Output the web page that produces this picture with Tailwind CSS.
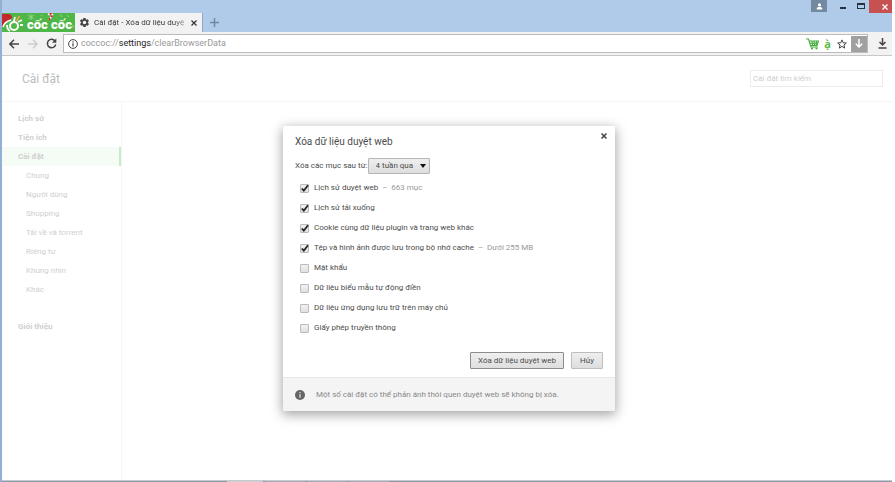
<!DOCTYPE html>
<html lang="vi">
<head>
    <meta charset="UTF-8">
    <meta name="viewport" content="width=device-width, initial-scale=1.0">
    <title>Cài đặt - Xóa dữ liệu duyệt web</title>
    <script src="https://cdn.jsdelivr.net/npm/@tailwindcss/browser@4"></script>
</head>
<body class="bg-white pr-[3px] font-[Roboto,sans-serif] text-[8px] text-[#4c4c4c]">
    <div class="relative flex h-screen flex-col overflow-hidden border-l-2 border-l-[#93afd4] bg-white">

        <!-- Title bar -->
        <header class="flex h-8 shrink-0 justify-between bg-[#afcbe9]">
            <div class="flex items-end">
                <a href="#" aria-label="Cốc Cốc" class="block h-[19px] w-[73px] overflow-hidden bg-[#4fb648]">
                    <svg viewBox="0 0 73 19" class="h-[19px] w-[73px]">
                        <g fill="none" stroke="#8fd489" stroke-width="1">
                            <path d="M29 1v6M26 2l6 4M32 2l-6 4M39 2l1 1M58 1l2 3M65 2l2 2M71 12v3"/>
                        </g>
                        <circle cx="12" cy="13" r="4" fill="none" stroke="#fff" stroke-width="2"/>
                        <path d="M5 12c0 3 1 5 3 6M16 9l4-2M18 12h3" fill="none" stroke="#fff" stroke-width="1.800"/>
                        <path d="M12 8l1-4" stroke="#fff" stroke-width="1.800"/>
                        <path d="M14.500 8l3-5" stroke="#f6a24c" stroke-width="1.600"/>
                        <path d="M0 1h6c3 0 4 2 4 4L3 11l-3 3z" fill="#c3272d"/>
                        <path d="M1 14c1-4 4-6 8-7" fill="none" stroke="#fff" stroke-width="1.600"/>
                        <text x="25" y="16" fill="#fff" font-family="Roboto, sans-serif" font-weight="900" font-size="13">cốc cốc</text>
                        <path d="M47 7l3-4c1-2-2-3-4-1" fill="none" stroke="#fff" stroke-width="2"/>
                        <path d="M47 7l3-4c1-2-2-3-4-1" fill="none" stroke="#d2232a" stroke-width="2" stroke-dasharray="2 1.500"/>
                    </svg>
                </a>
                <div class="flex h-[19px] w-[128px] items-center gap-1 border-r border-[#8fa9c6] bg-[#f2f2f2] pl-1 text-[#333]">
                    <svg viewBox="0 0 24 24" class="h-[11px] w-[11px] shrink-0" fill="#444"><path d="M19.4 13c0-.3.1-.6.1-1s0-.7-.1-1l2.100-1.600c.2-.2.200-.4.100-.6l-2-3.500c-.1-.2-.4-.3-.6-.2l-2.500 1c-.5-.4-1.100-.7-1.700-1l-.4-2.600c0-.3-.2-.5-.5-.5h-4c-.3 0-.5.200-.5.400l-.4 2.700c-.6.200-1.100.600-1.700 1l-2.500-1c-.2-.1-.5 0-.6.200l-2 3.500c-.1.200-.1.500.1.600L4.500 11c0 .3-.1.700-.1 1s0 .7.100 1l-2.100 1.600c-.2.200-.2.400-.1.600l2 3.500c.1.200.4.300.6.200l2.500-1c.5.400 1.100.7 1.700 1l.4 2.600c0 .3.200.5.500.5h4c.3 0 .5-.2.500-.4l.4-2.700c.6-.2 1.200-.6 1.700-1l2.500 1c.2.100.5 0 .6-.2l2-3.500c.1-.2.100-.5-.1-.600zM12 16a4 4 0 1 1 0-8 4 4 0 0 1 0 8z"/></svg>
                    <span class="min-w-0 flex-1 bg-linear-to-r from-[#333] from-85% to-[#bbb] bg-clip-text whitespace-nowrap text-transparent">Cài đặt - Xóa dữ liệu duyệ</span>
                    <button aria-label="Đóng thẻ" class="py-1 pr-[5px]">
                        <svg viewBox="0 0 6 6" class="h-[6px] w-[6px]" stroke="#333" stroke-width="1.200"><path d="M.5.5l5 5M5.500.5l-5 5"/></svg>
                    </button>
                </div>
                <button aria-label="Thẻ mới" class="ml-[7px] pb-[5px]">
                    <svg viewBox="0 0 9 9" class="h-[9px] w-[9px]" stroke="#7189a5" stroke-width="1.500"><path d="M4.500 0v9M0 4.500h9"/></svg>
                </button>
            </div>
            <div class="flex items-start">
                <button aria-label="Hồ sơ" class="mr-[9px] flex h-[12px] w-4 items-center justify-center bg-[#73899f]">
                    <svg viewBox="0 0 8 8" class="h-[7px] w-[7px]" fill="#fff"><circle cx="4" cy="2.200" r="1.800"/><path d="M1 7.500V6c0-2 6-2 6 0v1.500z"/></svg>
                </button>
                <button aria-label="Thu nhỏ" class="flex h-[9px] w-[13px] items-end justify-center"><span class="h-[2px] w-[6px] bg-[#26323f]"></span></button>
                <button aria-label="Phóng to" class="mr-[2px] ml-[5px] flex h-[12px] w-[13px] items-center justify-center"><span class="h-[6px] w-[8px] border border-t-2 border-[#26323f]"></span></button>
                <button aria-label="Đóng" class="flex h-[13px] w-[23px] items-center justify-center bg-[#c75050] pl-2">
                    <svg viewBox="0 0 6 6" class="h-[6px] w-[6px]" stroke="#fff" stroke-width="1.300"><path d="M.5.5l5 5M5.500.5l-5 5"/></svg>
                </button>
            </div>
        </header>

        <!-- Toolbar -->
        <nav class="flex h-6 shrink-0 items-center border-b border-[#c8c8c8] bg-[#f2f2f2]">
            <button aria-label="Quay lại" class="ml-[7px]">
                <svg viewBox="0 0 10 10" class="h-[10px] w-[10px]" fill="none" stroke="#444" stroke-width="1.500"><path d="M10 5H1M5 .8L.9 5 5 9.200"/></svg>
            </button>
            <button aria-label="Tiếp" class="ml-[9px]">
                <svg viewBox="0 0 10 10" class="h-[10px] w-[10px]" fill="none" stroke="#ccc" stroke-width="1.500"><path d="M0 5h9M5 .8L9.100 5 5 9.200"/></svg>
            </button>
            <button aria-label="Tải lại" class="ml-[8px]">
                <svg viewBox="0 0 11 11" class="h-[11px] w-[11px]"><path d="M9 3A4.200 4.200 0 1 0 9.700 6.500" fill="none" stroke="#444" stroke-width="1.500"/><path d="M10.300 .5v4.300H6z" fill="#444"/></svg>
            </button>
            <div class="ml-[6px] flex h-[19px] min-w-0 flex-1 items-center border border-[#bbb] bg-white pl-[4px]">
                <svg viewBox="0 0 10 10" class="h-[10px] w-[10px] shrink-0" fill="none" stroke="#444"><circle cx="5" cy="5" r="4.400"/><path d="M5 4.200v3.300M5 2.200v1.200" stroke-width="1.200"/></svg>
                <a href="#" class="ml-[3px] flex-1 pt-px text-[9px] text-[#999]">coccoc://<span class="text-[#222]">settings</span>/clearBrowserData</a>
                <button aria-label="Mua sắm">
                    <svg viewBox="0 0 13 12" class="h-[12px] w-[13px]" fill="none" stroke="#43ad3c"><path d="M0 1h2.500l2.500 8h7M3 3h9.500L11 7.500H4.500M3.500 5.200h8.500M6 3l.5 4.500M8.300 3v4.500M10.500 3L10 7.500" stroke-width="1.100"/><path d="M5 10.500h2M9.500 10.500h2" stroke-width="1.600"/></svg>
                </button>
                <button aria-label="Thêm dấu" class="ml-[5px] w-[7px] font-['Open_Sans',sans-serif] text-[11px] leading-3 font-bold text-[#5cb848]">ạ̀</button>
                <button aria-label="Đánh dấu" class="ml-[6px]">
                    <svg viewBox="0 0 10 10" class="h-[10px] w-[10px]" fill="none" stroke="#444"><path d="M5 .9l1.200 2.900 3.100.2-2.400 2 .8 3.100L5 7.400 2.300 9.100l.8-3.100-2.400-2 3.100-.2z"/></svg>
                </button>
                <button aria-label="Lưu" class="ml-[4px] flex h-4 w-4 items-center justify-center bg-[#a0a0a0]">
                    <svg viewBox="0 0 8 9" class="h-[9px] w-[8px]" fill="none" stroke="#fff" stroke-width="1.500"><path d="M4 0v8M.8 4.800L4 8l3.200-3.200"/></svg>
                </button>
            </div>
            <button aria-label="Tải xuống" class="mr-[5px] ml-[10px]">
                <svg viewBox="0 0 9 11" class="h-[11px] w-[9px]" fill="none" stroke="#444" stroke-width="1.500"><path d="M4.500 0v6.500M1.500 4l3 3 3-3M.5 10h8"/></svg>
            </button>
        </nav>

        <!-- Settings page -->
        <div class="flex min-h-0 flex-1 flex-col text-[#cfcfcf]">
            <div class="flex h-[46px] shrink-0 items-center justify-between border-b border-[#f6f6f6] pr-[9px] pl-[20px]">
                <h1 class="text-[12px] text-[#bcbcbc]">Cài đặt</h1>
                <input type="search" aria-label="Cài đặt tìm kiếm" placeholder="Cài đặt tìm kiếm" class="h-[17px] w-[133px] border border-[#ececec] px-[2px] placeholder:text-[#cfcfcf]">
            </div>
            <div class="flex min-h-0 flex-1">
                <aside class="flex w-[120px] flex-col border-r border-[#f7f7f7] pt-[7px] leading-[19px]">
                    <a href="#" class="pl-4 font-bold">Lịch sử</a>
                    <a href="#" class="pl-4 font-bold">Tiện ích</a>
                    <a href="#" class="border-r-2 border-[#c3edc6] bg-[#f4fcf5] pl-4 font-bold">Cài đặt</a>
                    <a href="#" class="pl-6">Chung</a>
                    <a href="#" class="pl-6">Người dùng</a>
                    <a href="#" class="pl-6">Shopping</a>
                    <a href="#" class="pl-6">Tải về và torrent</a>
                    <a href="#" class="pl-6">Riêng tư</a>
                    <a href="#" class="pl-6">Khung nhìn</a>
                    <a href="#" class="pl-6">Khác</a>
                    <a href="#" class="mt-[18px] pl-4 font-bold">Giới thiệu</a>
                </aside>
            </div>
        </div>

        <!-- Taskbar edge -->
        <footer class="flex h-[2px] shrink-0 gap-[2px] border-t border-[#c3cad2] bg-[#8d99a6] pl-[225px]">
            <span class="w-[36px] bg-[#d0d0d0]"></span>
            <span class="w-[40px] bg-[#a9adb3]"></span>
            <span class="w-[40px] bg-[#a9adb3]"></span>
            <span class="w-[40px] bg-[#a9adb3]"></span>
        </footer>

        <!-- Clear browsing data dialog -->
        <div class="absolute inset-x-0 top-[126px] flex justify-center pl-[4px]">
            <form role="dialog" aria-labelledby="dialogTitle" class="w-[332px] rounded-[2px] bg-white shadow-[0_3px_12px_1px_rgba(0,0,0,0.35)]">
                <div class="px-3 pt-2 pb-2">
                    <div class="flex justify-between">
                        <h2 id="dialogTitle" class="text-[10px] leading-4">Xóa dữ liệu duyệt web</h2>
                        <button type="button" aria-label="Đóng hộp thoại" class="-mt-3 -mr-2 p-1">
                            <svg viewBox="0 0 6 6" class="h-[6px] w-[6px]" stroke="#444" stroke-width="1.500"><path d="M.5.5l5 5M5.500.5l-5 5"/></svg>
                        </button>
                    </div>
                    <div class="mt-2 flex items-center">
                        <label for="period">Xóa các mục sau từ:</label>
                        <div class="relative">
                            <select id="period" class="block h-4 w-[62px] appearance-none rounded-[1px] border border-[#b5b5b5] bg-linear-to-b from-[#efefef] to-[#dedede] pl-[7px]">
                                <option>4 tuần qua</option>
                            </select>
                            <svg viewBox="0 0 6 4" class="pointer-events-none absolute top-[6px] right-[4px] h-[4px] w-[6px]" fill="#111"><path d="M0 0h6L3 4z"/></svg>
                        </div>
                    </div>
                    <div id="options" class="mt-1 flex flex-col pl-[5px]"></div>
                    <div class="mt-[14px] flex justify-end gap-[7px]">
                        <button type="submit" class="h-[17px] w-[94px] rounded-[1px] border border-[#8c8c8c] bg-linear-to-b from-[#efefef] to-[#dedede]">Xóa dữ liệu duyệt web</button>
                        <button type="button" class="h-[17px] w-[32px] rounded-[1px] border border-[#bdbdbd] bg-linear-to-b from-[#efefef] to-[#dedede]">Hủy</button>
                    </div>
                </div>
                <div class="flex h-[34px] items-center gap-[11px] rounded-b-[2px] border-t border-[#e8e8e8] bg-[#f4f4f4] pl-3 text-[#888]">
                    <svg viewBox="0 0 10 10" class="h-[10px] w-[10px]"><circle cx="5" cy="5" r="5" fill="#666"/><path d="M5 2v1.200M5 4.200v3.500" stroke="#ddd" stroke-width="1.300"/></svg>
                    <p>Một số cài đặt có thể phản ánh thói quen duyệt web sẽ không bị xóa.</p>
                </div>
            </form>
        </div>
    </div>

    <script>
        const options = [
            { label: 'Lịch sử duyệt web', note: '663 mục', checked: true },
            { label: 'Lịch sử tải xuống', checked: true },
            { label: 'Cookie cùng dữ liệu plugin và trang web khác', checked: true },
            { label: 'Tệp và hình ảnh được lưu trong bộ nhớ cache', note: 'Dưới 255 MB', checked: true },
            { label: 'Mật khẩu' },
            { label: 'Dữ liệu biểu mẫu tự động điền' },
            { label: 'Dữ liệu ứng dụng lưu trữ trên máy chủ' },
            { label: 'Giấy phép truyền thông' }
        ];

        document.getElementById('options').innerHTML = options.map((option, i) => `
            <div class="flex h-5 items-center">
                <span class="relative h-[9px] w-[9px]">
                    <input type="checkbox" id="option${i}" ${option.checked ? 'checked' : ''}
                           class="peer block h-[9px] w-[9px] appearance-none rounded-[1px] border border-[#bbb] bg-linear-to-b from-[#f2f2f2] to-[#e0e0e0]">
                    <svg viewBox="0 0 9 9" class="pointer-events-none absolute inset-0 hidden h-[9px] w-[9px] peer-checked:block" fill="none" stroke="#222" stroke-width="1.800"><path d="M1.800 4.500l2 2.200L8 1.200"/></svg>
                </span>
                <label for="option${i}" class="ml-[5px]">${option.label}</label>
                ${option.note ? `<span class="ml-1 text-[#999]">–&nbsp; ${option.note}</span>` : ''}
            </div>
        `).join('');
    </script>
</body>
</html>
